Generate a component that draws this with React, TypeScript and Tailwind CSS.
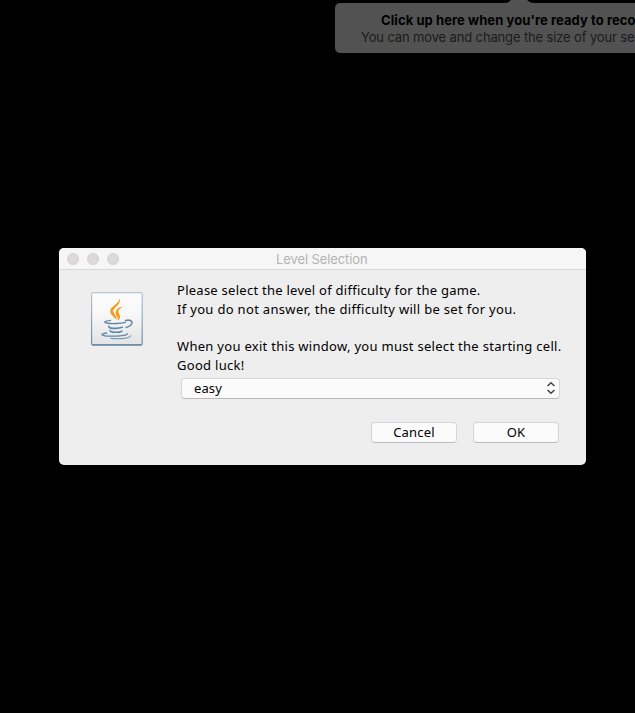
import React from "react";

function JavaIcon() {
  return (
    <svg width="52" height="54" viewBox="0 0 52 54" fill="none" aria-label="Java">
      <defs>
        <linearGradient id="tile" x1="0" y1="0" x2="0" y2="1">
          <stop offset="0" stopColor="#fcfcfc" />
          <stop offset="0.4" stopColor="#f8f8f8" />
          <stop offset="1" stopColor="#e2e3e4" />
        </linearGradient>
        <linearGradient id="edge" x1="0" y1="0" x2="0" y2="1">
          <stop offset="0" stopColor="#b5c6d5" />
          <stop offset="1" stopColor="#6d8ba6" />
        </linearGradient>
      </defs>
      <rect x="0.6" y="0.6" width="50.6" height="52.6" rx="1.5" fill="url(#tile)" stroke="url(#edge)" strokeWidth="1.2" />
      <path d="M1.5 52.7H50.5" stroke="#6f8ca6" strokeWidth="1.2" />
      <path d="M28.3 6C31.6 12.6 21.2 15.6 22.3 19.8C22.9 22 25.6 24.4 26.4 27.8C22 24.6 18.6 21.6 19.3 18.2C20.4 13.6 29.2 11.6 28.3 6Z" fill="#f59a16" />
      <path d="M32.3 14.2C28.8 16.2 26.8 18 27.3 20.2C27.9 22.2 30.8 24.2 27.3 28.8C27.5 25.4 25 23.8 24.7 21.2C24.4 17.6 27.6 15 32.3 14.2Z" fill="#f59a16" />
      <g stroke="#6288a8" strokeLinecap="round">
        <path d="M19.5 28.3C14 29 12.3 30.2 15.4 31C20.5 32 30.5 31.6 34.4 30.3" strokeWidth="1.3" />
        <path d="M34.5 28.6C43 26.4 43 33.2 35.1 35.4" strokeWidth="1.6" />
        <path d="M17.9 34.3C16.7 36.7 26.5 37 31.3 35.3" strokeWidth="1.6" />
        <path d="M19.2 38.4C18.5 40.6 27.5 40.9 31 39.2" strokeWidth="1.6" />
        <path d="M15.7 41C8 42.2 10.6 43.8 19 44.1C27 44.3 37 43.4 36.2 41.7" strokeWidth="1.3" />
        <path d="M20 46.4C28.5 47.5 39.4 46.4 40 43.8" strokeWidth="1" />
      </g>
    </svg>
  );
}

function RecordingHint() {
  return (
    <div className="relative ml-[335px] h-[50px] w-[400px] rounded-[5px] bg-[#525252] pt-[9px] font-['Inter',sans-serif] text-[13px] leading-[17px] whitespace-nowrap">
      <svg className="absolute top-[-3px] left-[168px]" width="32" height="3" viewBox="0 0 32 3">
        <path d="M1 3C4.5 3 6 2 8 0H24C26 2 28 3 31 3Z" fill="#525252" />
      </svg>
      <div className="pl-[46px] font-bold tracking-[0.08px] text-black">Click up here when you're ready to reco</div>
      <div className="pl-[26px] tracking-[-0.14px] text-[#1b1b1b]">You can move and change the size of your se</div>
    </div>
  );
}

const button =
  "h-[21px] w-[86px] rounded-[4px] border border-[#d5d5d8] border-b-[#bcbcbc] bg-[#fbfbfb] text-center text-[13px] leading-[19px] tracking-[0.2px]";

export default function App() {
  return (
    <main className="h-[713px] w-[635px] overflow-hidden bg-black pt-[3px]">
      <RecordingHint />
      <section className="mt-[195px] ml-[59px] h-[217px] w-[527px] overflow-hidden rounded-[5px] bg-[#eeeeee] font-['Noto_Sans',sans-serif] text-black">
        <header className="flex h-[22px] items-center border-b border-[#d7d9d9] bg-[#f6f6f6] pl-[8px]">
          <div className="flex gap-[8px]">
            <span className="size-[12px] rounded-full border border-[#d2d0d1] bg-[#dbd9da]" />
            <span className="size-[12px] rounded-full border border-[#d2d0d1] bg-[#dbd9da]" />
            <span className="size-[12px] rounded-full border border-[#d2d0d1] bg-[#dbd9da]" />
          </div>
          <h1 className="ml-[157px] pt-[1px] font-['Inter',sans-serif] text-[13px] leading-[16px] tracking-[-0.1px] whitespace-nowrap text-[#b4b4b4]">Level Selection</h1>
        </header>
        <div className="flex">
          <div className="mt-[22px] ml-[32px] w-[52px] shrink-0">
            <JavaIcon />
          </div>
          <div className="ml-[34px] w-[390px] shrink-0 pt-[11px]">
            <div className="text-[13px] leading-[18.75px] whitespace-nowrap">
              <p className="tracking-[0.26px]">Please select the level of difficulty for the game.</p>
              <p className="tracking-[0.32px]">If you do not answer, the difficulty will be set for you.</p>
              <p>&nbsp;</p>
              <p className="tracking-[0.29px]">When you exit this window, you must select the starting cell.</p>
              <p className="tracking-[0.3px]">Good luck!</p>
            </div>
            <div className="mt-[3px] ml-[4px] flex h-[21px] w-[379px] items-center justify-between rounded-[4px] border border-[#d6d6d6] border-b-[#b9b9b9] bg-[#fbfbfb] pr-[3px] pl-[12px] text-[13px] leading-[19px]">
              <span className="tracking-[0.1px]">easy</span>
              <svg width="10" height="14" viewBox="0 0 10 14" fill="none" stroke="#444" strokeWidth="1.5">
                <path d="M1.5 5L5 1.7L8.5 5M1.5 9L5 12.3L8.5 9" />
              </svg>
            </div>
            <div className="mt-[23px] ml-[194px] flex gap-[16px]">
              <button className={button}>Cancel</button>
              <button className={button}>OK</button>
            </div>
          </div>
        </div>
      </section>
    </main>
  );
}
